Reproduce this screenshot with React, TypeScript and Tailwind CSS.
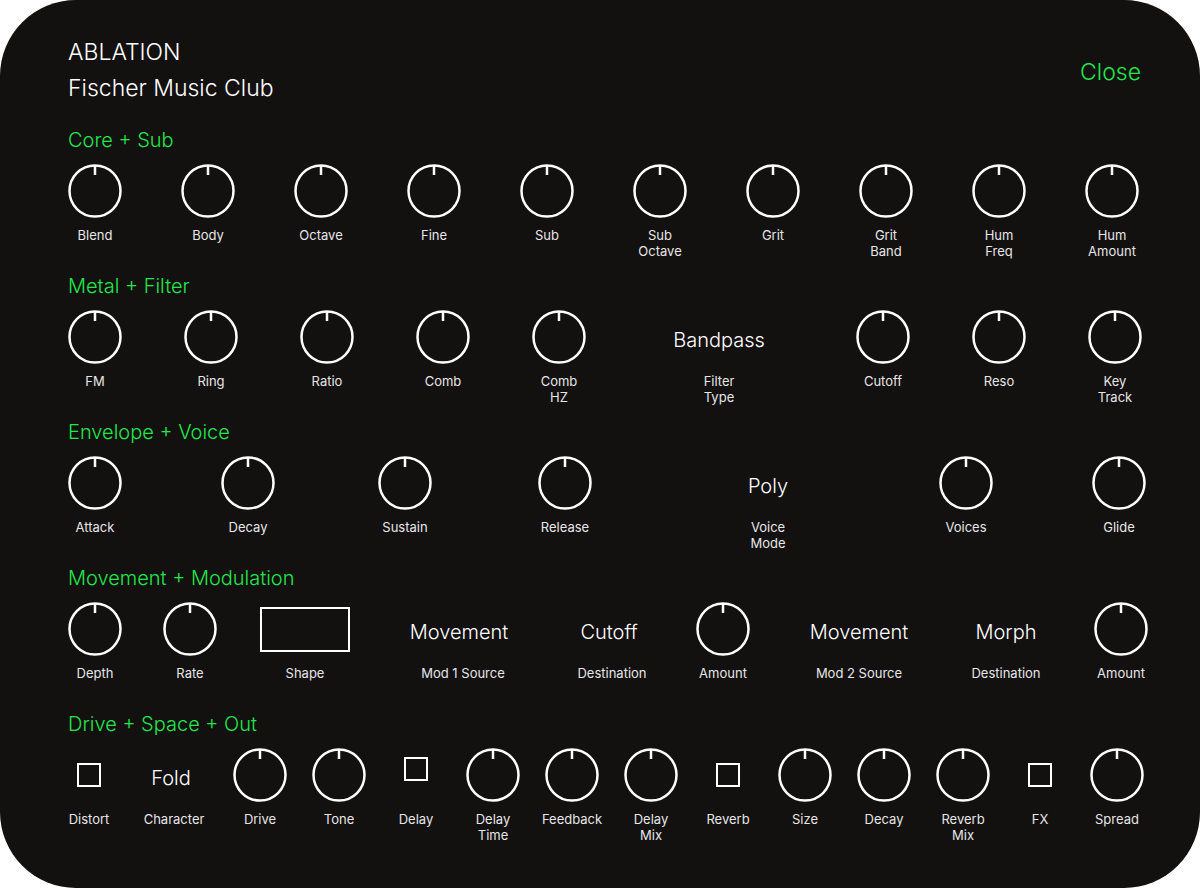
import React from "react";

type Item = { kind: "knob" | "text" | "rect" | "check"; label: string[]; ml: string; value?: string; extra?: string };

const Knob = () => (
  <svg width="54" height="54" viewBox="0 0 54 54" className="shrink-0">
    <circle cx="27" cy="27" r="25.5" fill="none" stroke="white" strokeWidth="2.5" />
    <line x1="27" y1="2" x2="27" y2="11" stroke="white" strokeWidth="2.5" />
  </svg>
);

const Cell = ({ it }: { it: Item }) => (
  <div className={`w-0 shrink-0 flex flex-col items-center ${it.ml}`}>
    <div className="h-[54px] flex items-center justify-center">
      {it.kind === "knob" && <Knob />}
      {it.kind === "text" && (
        <span className={`text-[20px] font-light text-white whitespace-nowrap translate-y-[3px] ${it.extra ?? ""}`}>{it.value}</span>
      )}
      {it.kind === "rect" && <div className="w-[90px] h-[45px] shrink-0 border-[2.5px] border-white" />}
      {it.kind === "check" && <div className={`w-[24px] h-[24px] shrink-0 border-[2.5px] border-white ${it.extra ?? ""}`} />}
    </div>
    <div className="mt-[9px] h-[32px] text-[13px] leading-[16px] text-[#e6e6e6] text-center whitespace-nowrap">
      {it.label.map((l, i) => (
        <div key={i}>{l}</div>
      ))}
    </div>
  </div>
);

const k = (label: string[], ml: string): Item => ({ kind: "knob", label, ml });

const sections: { title: string; pl: string; items: Item[] }[] = [
  {
    title: "Core + Sub",
    pl: "pl-[95px]",
    items: [
      k(["Blend"], "ml-0"),
      k(["Body"], "ml-[113px]"),
      k(["Octave"], "ml-[113px]"),
      k(["Fine"], "ml-[113px]"),
      k(["Sub"], "ml-[113px]"),
      k(["Sub", "Octave"], "ml-[113px]"),
      k(["Grit"], "ml-[113px]"),
      k(["Grit", "Band"], "ml-[113px]"),
      k(["Hum", "Freq"], "ml-[113px]"),
      k(["Hum", "Amount"], "ml-[113px]"),
    ],
  },
  {
    title: "Metal + Filter",
    pl: "pl-[95px]",
    items: [
      k(["FM"], "ml-0"),
      k(["Ring"], "ml-[116px]"),
      k(["Ratio"], "ml-[116px]"),
      k(["Comb"], "ml-[116px]"),
      k(["Comb", "HZ"], "ml-[116px]"),
      { kind: "text", value: "Bandpass", label: ["Filter", "Type"], ml: "ml-[160px]" },
      k(["Cutoff"], "ml-[164px]"),
      k(["Reso"], "ml-[116px]"),
      k(["Key", "Track"], "ml-[116px]"),
    ],
  },
  {
    title: "Envelope + Voice",
    pl: "pl-[95px]",
    items: [
      k(["Attack"], "ml-0"),
      k(["Decay"], "ml-[153px]"),
      k(["Sustain"], "ml-[157px]"),
      k(["Release"], "ml-[160px]"),
      { kind: "text", value: "Poly", label: ["Voice", "Mode"], ml: "ml-[203px]" },
      k(["Voices"], "ml-[198px]"),
      k(["Glide"], "ml-[153px]"),
    ],
  },
  {
    title: "Movement + Modulation",
    pl: "pl-[95px]",
    items: [
      k(["Depth"], "ml-0"),
      k(["Rate"], "ml-[95px]"),
      { kind: "rect", label: ["Shape"], ml: "ml-[115px]" },
      { kind: "text", value: "Movement", label: ["Mod 1 Source"], ml: "ml-[158px]", extra: "-translate-x-[4px]" },
      { kind: "text", value: "Cutoff", label: ["Destination"], ml: "ml-[149px]", extra: "-translate-x-[3px]" },
      k(["Amount"], "ml-[111px]"),
      { kind: "text", value: "Movement", label: ["Mod 2 Source"], ml: "ml-[136px]" },
      { kind: "text", value: "Morph", label: ["Destination"], ml: "ml-[147px]" },
      k(["Amount"], "ml-[115px]"),
    ],
  },
  {
    title: "Drive + Space + Out",
    pl: "pl-[89px]",
    items: [
      { kind: "check", label: ["Distort"], ml: "ml-0" },
      { kind: "text", value: "Fold", label: ["Character"], ml: "ml-[85px]", extra: "-translate-x-[3px]" },
      k(["Drive"], "ml-[86px]"),
      k(["Tone"], "ml-[79px]"),
      { kind: "check", label: ["Delay"], ml: "ml-[77px]", extra: "-translate-y-[6px]" },
      k(["Delay", "Time"], "ml-[77px]"),
      k(["Feedback"], "ml-[79px]"),
      k(["Delay", "Mix"], "ml-[79px]"),
      { kind: "check", label: ["Reverb"], ml: "ml-[77px]" },
      k(["Size"], "ml-[77px]"),
      k(["Decay"], "ml-[79px]"),
      k(["Reverb", "Mix"], "ml-[79px]"),
      { kind: "check", label: ["FX"], ml: "ml-[77px]" },
      k(["Spread"], "ml-[77px]"),
    ],
  },
];

export default function App() {
  return (
    <div className="w-[1200px] h-[888px] bg-white" style={{ fontFamily: "Inter, 'Noto Sans', sans-serif" }}>
      <div className="w-full h-full bg-[#131010] rounded-[76px] pt-[38px] overflow-hidden">
        <div className="flex justify-between items-start pl-[68px] pr-[59px]">
          <div className="text-white text-[23px] leading-[28px] font-light">
            <div>ABLATION</div>
            <div className="mt-[8px]">Fischer Music Club</div>
          </div>
          <div className="text-[#22e64a] text-[23px] leading-[28px] mt-[20px] font-light">Close</div>
        </div>
        <div className="mt-[26px] flex flex-col gap-[15px]">
          {sections.map((s) => (
            <div key={s.title}>
              <div className="pl-[68px] text-[#22e64a] text-[20px] leading-[24px] font-light">{s.title}</div>
              <div className={`mt-[12px] flex ${s.pl}`}>
                {s.items.map((it, i) => (
                  <Cell key={i} it={it} />
                ))}
              </div>
            </div>
          ))}
        </div>
      </div>
    </div>
  );
}
